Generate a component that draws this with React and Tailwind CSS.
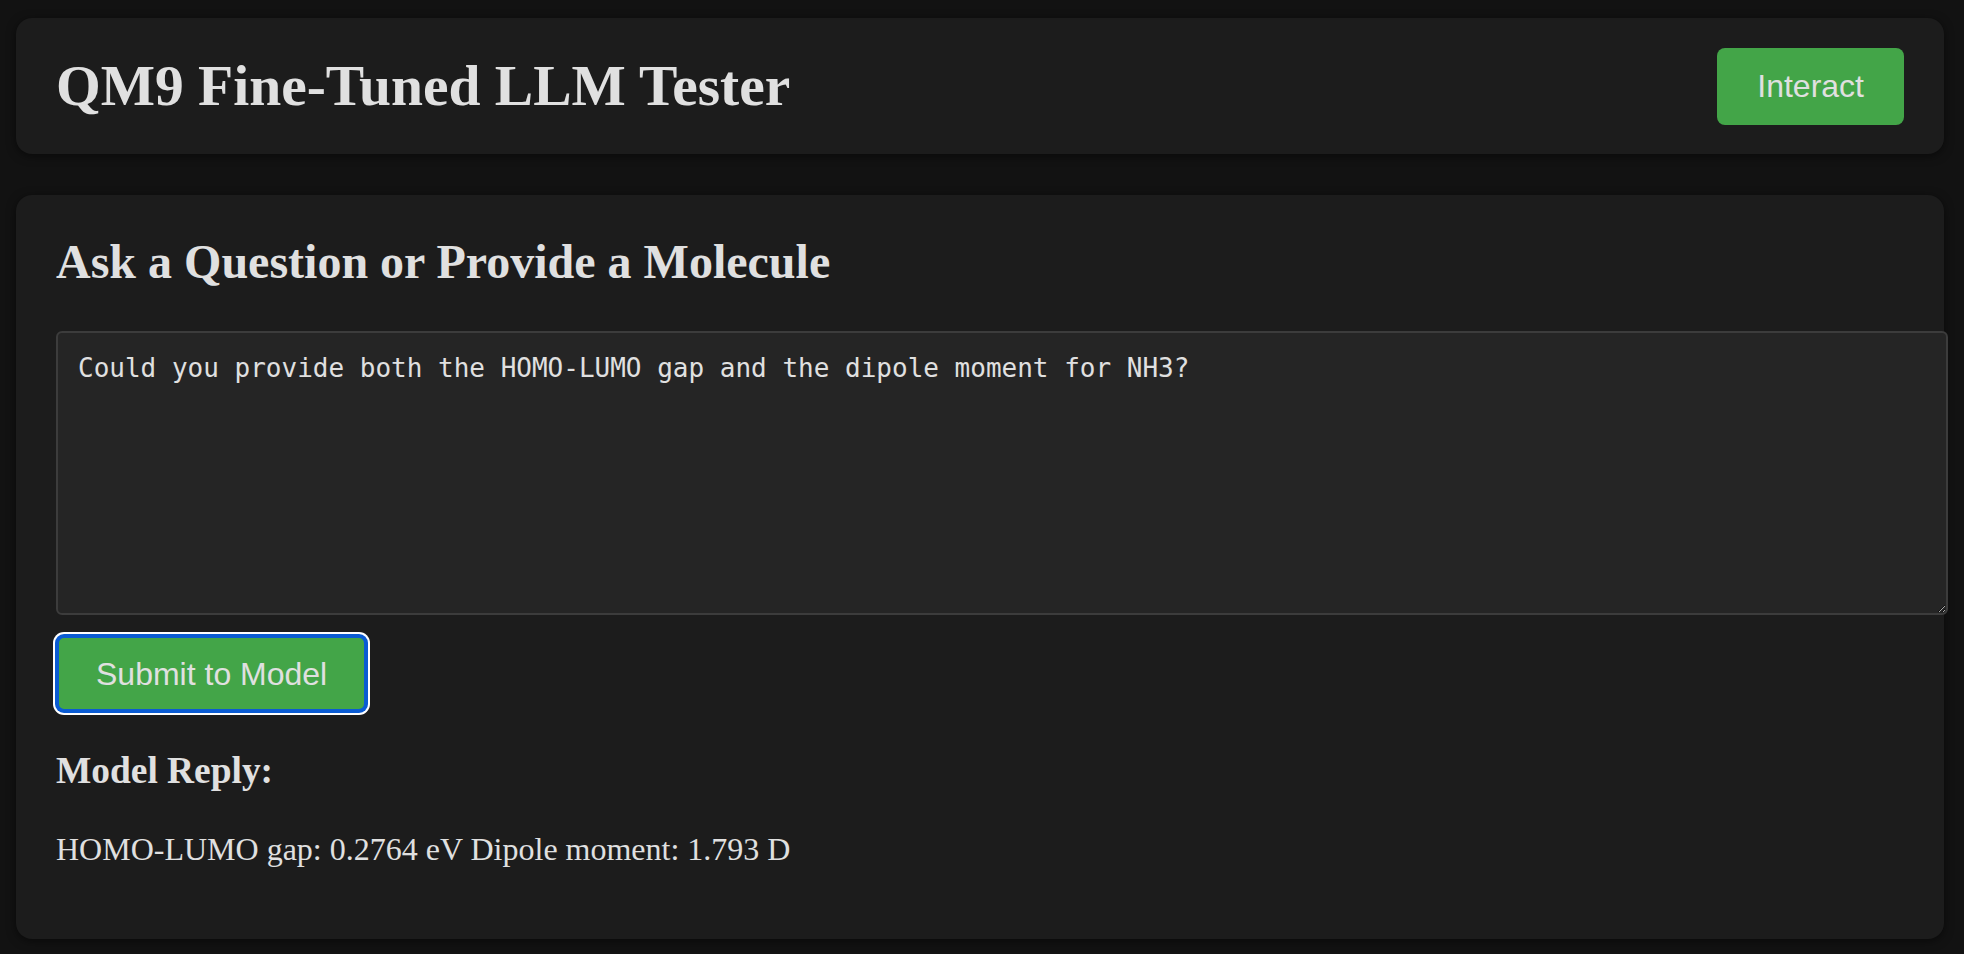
import React, { useState } from 'react';

const App = () => {
  const [question, setQuestion] = useState(
    'Could you provide both the HOMO-LUMO gap and the dipole moment for NH3?'
  );

  return (
    <div className="min-h-screen bg-[#121212] pt-[18px] pl-4 pr-5 pb-4 text-[#e0e0e0] font-['Liberation_Serif',serif]">
      {/* Header */}
      <header className="flex h-[136px] items-center justify-between rounded-2xl bg-[#1c1c1c] px-10 shadow-[0_2px_10px_rgba(0,0,0,0.5)]">
        <h1 className="text-[57.5px] font-bold leading-[1.107]">QM9 Fine-Tuned LLM Tester</h1>
        <button className="h-[77px] rounded-lg bg-[#43a548] px-10 text-[32px] leading-none text-[#e0e0e0] font-['Liberation_Sans',sans-serif]">
          Interact
        </button>
      </header>

      {/* Query card */}
      <main className="mt-[41px] rounded-2xl bg-[#1c1c1c] px-10 pt-10 pb-10 shadow-[0_2px_10px_rgba(0,0,0,0.5)]">
        <h2 className="text-[48px] font-bold leading-[1.107]">Ask a Question or Provide a Molecule</h2>

        <textarea
          value={question}
          onChange={(e) => setQuestion(e.target.value)}
          className="mt-[43px] box-content block h-[240px] w-full rounded-md border-2 border-[#3c3c3c] bg-[#252525] px-5 py-5 text-[26px] leading-[1.164] text-[#e0e0e0] outline-none font-['DejaVu_Sans_Mono',monospace]"
        />

        <button className="mt-[20px] block h-[77px] rounded-lg border-[3px] border-[#0a5bd3] bg-[#43a548] px-[37px] text-[32px] leading-none text-[#e0e0e0] shadow-[0_0_0_1px_#0a5bd3,0_0_0_3px_#ffffff] font-['Liberation_Sans',sans-serif]">
          Submit to Model
        </button>

        <h3 className="mt-[38px] text-[37.4px] font-bold leading-[1.107]">Model Reply:</h3>
        <p className="mt-[40px] mb-8 text-[32px] leading-[1.107]">
          HOMO-LUMO gap: 0.2764 eV Dipole moment: 1.793 D
        </p>
      </main>
    </div>
  );
};

export default App;
